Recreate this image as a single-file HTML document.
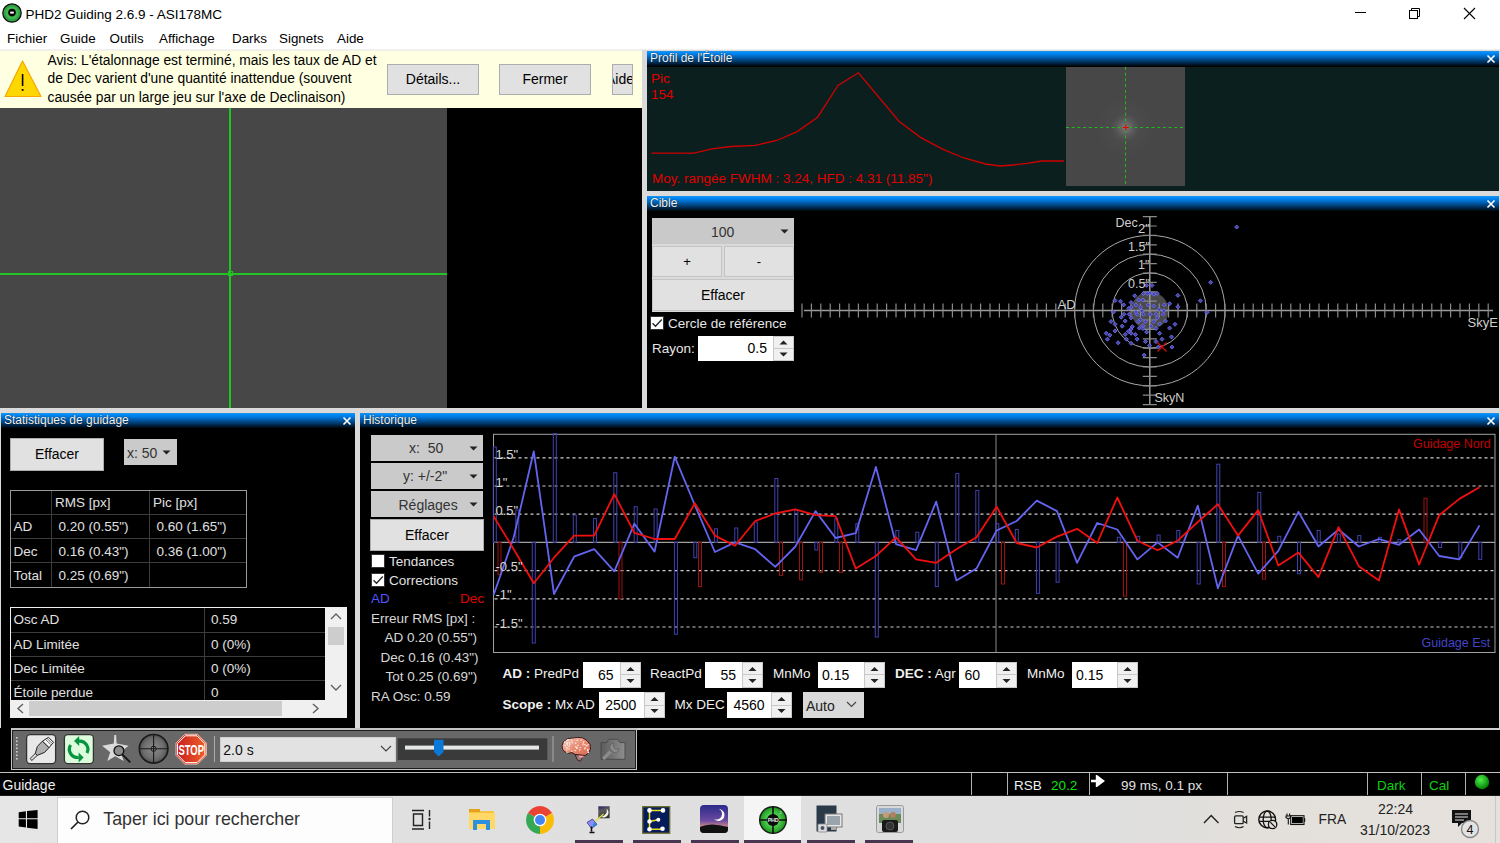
<!DOCTYPE html><html><head><meta charset="utf-8"><style>
html,body{margin:0;padding:0;width:1500px;height:843px;overflow:hidden;background:#fff;position:relative}
.t{position:absolute;font-family:'Liberation Sans', sans-serif;white-space:nowrap;line-height:1}
div{font-family:'Liberation Sans', sans-serif}
</style></head><body>
<div style="position:absolute;left:0px;top:0px;width:1500px;height:49px;background:#fff;"></div>
<svg style="position:absolute;left:2px;top:3px" width="20" height="20" viewBox="0 0 20 20">
<circle cx="10" cy="10" r="9.2" fill="#2ea043" stroke="#111" stroke-width="1.3"/>
<circle cx="10" cy="10" r="6.5" fill="#40b850"/>
<circle cx="10" cy="9.6" r="3.8" fill="#000"/>
<rect x="8.2" y="8.6" width="3.6" height="2" fill="#fff"/>
</svg>
<div class="t" style="left:25.5px;top:7.57px;font-size:13.5px;color:#000;">PHD2 Guiding 2.6.9 - ASI178MC</div>
<div style="position:absolute;left:1355px;top:12px;width:11px;height:1px;background:#000;"></div>
<svg style="position:absolute;left:1408px;top:7px" width="13" height="13" viewBox="0 0 13 13">
<rect x="1.5" y="3.5" width="8" height="8" fill="#fff" stroke="#000" stroke-width="1"/>
<path d="M3.5 3.5 V1.5 H11.5 V9.5 H9.5" fill="none" stroke="#000" stroke-width="1"/></svg>
<svg style="position:absolute;left:1463px;top:7px" width="13" height="13" viewBox="0 0 13 13">
<path d="M1 1 L12 12 M12 1 L1 12" stroke="#000" stroke-width="1.1"/></svg>
<div class="t" style="left:7px;top:32.46px;font-size:13.4px;color:#000;">Fichier</div>
<div class="t" style="left:60px;top:32.46px;font-size:13.4px;color:#000;">Guide</div>
<div class="t" style="left:109.5px;top:32.46px;font-size:13.4px;color:#000;">Outils</div>
<div class="t" style="left:159px;top:32.46px;font-size:13.4px;color:#000;">Affichage</div>
<div class="t" style="left:232px;top:32.46px;font-size:13.4px;color:#000;">Darks</div>
<div class="t" style="left:279px;top:32.46px;font-size:13.4px;color:#000;">Signets</div>
<div class="t" style="left:337px;top:32.46px;font-size:13.4px;color:#000;">Aide</div>
<div style="position:absolute;left:0px;top:49px;width:1500px;height:1px;background:#f0f0f0;"></div>
<div style="position:absolute;left:0px;top:50px;width:1500px;height:746px;background:#dadada;"></div>
<div style="position:absolute;left:0px;top:50px;width:642px;height:58px;background:#ffffe1;"></div>
<div style="position:absolute;left:0px;top:50px;width:642px;height:1px;background:#f3f2ea;"></div>
<svg style="position:absolute;left:4px;top:60px" width="39" height="39" viewBox="0 0 39 39">
<path d="M18.5 1 L37 36.5 L1 36.5 Z" fill="#ffd700" stroke="#f4a800" stroke-width="1.2" stroke-linejoin="round"/>
<rect x="17.8" y="14" width="1.6" height="12" fill="#000"/><rect x="17.7" y="29" width="1.8" height="1.8" fill="#000"/>
</svg>
<div class="t" style="left:47.5px;top:53.62px;font-size:13.8px;color:#000;">Avis: L'étalonnage est terminé, mais les taux de AD et</div>
<div class="t" style="left:47.5px;top:72.22px;font-size:13.8px;color:#000;">de Dec varient d'une quantité inattendue (souvent</div>
<div class="t" style="left:47.5px;top:90.82px;font-size:13.8px;color:#000;">causée par un large jeu sur l'axe de Declinaison)</div>
<div style="position:absolute;left:387px;top:64px;width:92px;height:31px;background:#e1e1e1;border:1px solid #adadad;box-sizing:border-box;font-family:'Liberation Sans', sans-serif;font-size:14px;color:#000;line-height:29px;text-align:center;white-space:nowrap;overflow:hidden;">Détails...</div>
<div style="position:absolute;left:499px;top:64px;width:92px;height:31px;background:#e1e1e1;border:1px solid #adadad;box-sizing:border-box;font-family:'Liberation Sans', sans-serif;font-size:14px;color:#000;line-height:29px;text-align:center;white-space:nowrap;overflow:hidden;">Fermer</div>
<div style="position:absolute;left:612px;top:64px;width:21px;height:31px;background:#e1e1e1;border:1px solid #adadad;box-sizing:border-box;font-family:'Liberation Sans', sans-serif;font-size:14px;color:#000;line-height:29px;text-align:center;white-space:nowrap;overflow:hidden;text-align:left"><span style="position:absolute;left:-7px;top:0;width:28px;text-align:center">Aide</span></div>
<div style="position:absolute;left:0px;top:108px;width:642px;height:299.5px;background:#000;"></div>
<div style="position:absolute;left:0px;top:108px;width:447px;height:299.5px;background:#474747;"></div>
<div style="position:absolute;left:229px;top:108px;width:2px;height:299.5px;background:#22c422;"></div>
<div style="position:absolute;left:0px;top:273px;width:447px;height:2px;background:#22c422;"></div>
<div style="position:absolute;left:227.5px;top:270.5px;width:5px;height:5px;background:transparent;border:1px solid #22c422;box-sizing:border-box"></div>
<div style="position:absolute;left:647px;top:51px;width:852px;height:140px;background:#0b1f1e;"></div><div style="position:absolute;left:647px;top:51px;width:852px;height:16px;background:linear-gradient(#2a94e0 0px,#008cfc 1.5px,#0078dc 4px,#005aa8 7px,#003c70 10px,#001c36 13px,#000 15.5px);"></div><div class="t" style="left:650px;top:52.24px;font-size:12px;color:#f4f4f4;text-shadow:0 0 1px #000">Profil de l'Étoile</div><svg style="position:absolute;left:1486px;top:54px" width="10" height="10" viewBox="0 0 10 10"><path d="M1.5 1.5 L8.5 8.5 M8.5 1.5 L1.5 8.5" stroke="#fff" stroke-width="1.6"/></svg>
<div class="t" style="left:651px;top:71.57px;font-size:13.5px;color:#e00000;">Pic</div>
<div class="t" style="left:651px;top:87.57px;font-size:13.5px;color:#e00000;">154</div>
<div class="t" style="left:652px;top:171.57px;font-size:13.5px;color:#e00000;">Moy. rangée FWHM : 3.24, HFD : 4.31 (11.85")</div>
<svg style="position:absolute;left:0;top:0" width="1500" height="843"><polyline fill="none" stroke="#d00000" stroke-width="1.3" points="651.5,153.2 694,153.2 712,148.9 731.2,146.5 755.2,145.3 776.8,140.5 797.2,131.6 817.6,117.2 838,85.5 858.4,72.8 899.2,121.5 920.8,137.6 943.6,149.6 964,158 985.6,164 1000,166 1013,165 1027,163.3 1041.7,161 1064,161"/></svg>
<div style="position:absolute;left:1066px;top:67px;width:119px;height:119px;background:radial-gradient(circle at 59.5px 60.5px,#7c7c7c 0,#6a6a6a 4px,#565656 9px,#4b4b4b 14px,#474747 30px);"></div>
<svg style="position:absolute;left:1066px;top:67px" width="119" height="119"><path d="M59.5 0 V119 M0 60.5 H119" stroke="#1cbc1c" stroke-width="1" stroke-dasharray="3,2.7"/><path d="M59.8 57.5 V63.5 M56.8 60.5 H62.8" stroke="#ee0000" stroke-width="1.2"/></svg>
<div style="position:absolute;left:647px;top:196px;width:852px;height:211.5px;background:#000;"></div><div style="position:absolute;left:647px;top:196px;width:852px;height:16px;background:linear-gradient(#2a94e0 0px,#008cfc 1.5px,#0078dc 4px,#005aa8 7px,#003c70 10px,#001c36 13px,#000 15.5px);"></div><div class="t" style="left:650px;top:197.24px;font-size:12px;color:#f4f4f4;text-shadow:0 0 1px #000">Cible</div><svg style="position:absolute;left:1486px;top:199px" width="10" height="10" viewBox="0 0 10 10"><path d="M1.5 1.5 L8.5 8.5 M8.5 1.5 L1.5 8.5" stroke="#fff" stroke-width="1.6"/></svg>
<div style="position:absolute;left:652px;top:218px;width:142px;height:26px;background:#c9c9c9;"></div>
<div class="t" style="left:711px;top:224.85px;font-size:14px;color:#333;">100</div>
<svg style="position:absolute;left:780px;top:229px" width="9" height="5"><path d="M0.5 0.5 H8.5 L4.5 4.5 Z" fill="#222"/></svg>
<div style="position:absolute;left:652px;top:244px;width:142px;height:68px;background:#dadada;"></div>
<div style="position:absolute;left:652px;top:245.5px;width:70px;height:31px;background:#e1e1e1;border:1px solid #c4c4c4;box-sizing:border-box;font-family:'Liberation Sans', sans-serif;font-size:13px;color:#000;line-height:29px;text-align:center;white-space:nowrap;overflow:hidden;">+</div>
<div style="position:absolute;left:724px;top:245.5px;width:70px;height:31px;background:#e1e1e1;border:1px solid #c4c4c4;box-sizing:border-box;font-family:'Liberation Sans', sans-serif;font-size:13px;color:#000;line-height:29px;text-align:center;white-space:nowrap;overflow:hidden;">-</div>
<div style="position:absolute;left:652px;top:279px;width:142px;height:32px;background:#e1e1e1;border:1px solid #c4c4c4;box-sizing:border-box;font-family:'Liberation Sans', sans-serif;font-size:14px;color:#000;line-height:30px;text-align:center;white-space:nowrap;overflow:hidden;">Effacer</div>
<div style="position:absolute;left:650px;top:316px;width:14px;height:14px;background:#fff;border:1px solid #333;box-sizing:border-box"></div><svg style="position:absolute;left:650px;top:316px" width="14" height="14" viewBox="0 0 14 14"><path d="M2.5 7.2 L5.5 10.2 L11.8 3.5" fill="none" stroke="#222" stroke-width="1.3"/></svg>
<div class="t" style="left:668px;top:317.17px;font-size:13.5px;color:#e6e6e6;">Cercle de référence</div>
<div class="t" style="left:652px;top:341.57px;font-size:13.5px;color:#e6e6e6;">Rayon:</div>
<div style="position:absolute;left:698px;top:336px;width:75px;height:25px;background:#fff;"></div><div class="t" style="left:698px;top:336px;width:69px;height:25px;line-height:25px;font-size:14px;color:#000;text-align:right">0.5</div><div style="position:absolute;left:773px;top:336px;width:21px;height:25px;background:#f0f0f0;border:1px solid #c8c8c8;box-sizing:border-box"></div><div style="position:absolute;left:774px;top:348.0px;width:19px;height:1px;background:#c8c8c8;"></div><svg style="position:absolute;left:773px;top:336px" width="21" height="25"><path d="M6.5 8.5 L10.5 4.5 L14.5 8.5 Z M6.5 16.5 L10.5 20.5 L14.5 16.5 Z" fill="#222"/></svg>
<svg style="position:absolute;left:0;top:0" width="1500" height="843"><circle cx="1149.8" cy="310.6" r="18.8" fill="#4a4a4a"/><circle cx="1149.8" cy="310.6" r="37.6" fill="none" stroke="#a8a8a8" stroke-width="1"/><circle cx="1149.8" cy="310.6" r="56.4" fill="none" stroke="#a8a8a8" stroke-width="1"/><circle cx="1149.8" cy="310.6" r="75.2" fill="none" stroke="#a8a8a8" stroke-width="1"/><path d="M804 310.6 H1493 M1149.8 216.5 V404.5" stroke="#9a9a9a" stroke-width="1.5"/><path d="M802.0 303.6 V317.4 M811.4 303.6 V317.4 M820.8 303.6 V317.4 M830.2 303.6 V317.4 M839.6 303.6 V317.4 M849.0 303.6 V317.4 M858.4 303.6 V317.4 M867.8 303.6 V317.4 M877.2 303.6 V317.4 M886.6 303.6 V317.4 M896.0 303.6 V317.4 M905.4 303.6 V317.4 M914.8 303.6 V317.4 M924.2 303.6 V317.4 M933.6 303.6 V317.4 M943.0 303.6 V317.4 M952.4 303.6 V317.4 M961.8 303.6 V317.4 M971.2 303.6 V317.4 M980.6 303.6 V317.4 M990.0 303.6 V317.4 M999.4 303.6 V317.4 M1008.8 303.6 V317.4 M1018.2 303.6 V317.4 M1027.6 303.6 V317.4 M1037.0 303.6 V317.4 M1046.4 303.6 V317.4 M1055.8 303.6 V317.4 M1065.2 303.6 V317.4 M1074.6 303.6 V317.4 M1084.0 303.6 V317.4 M1093.4 303.6 V317.4 M1102.8 303.6 V317.4 M1112.2 303.6 V317.4 M1121.6 303.6 V317.4 M1131.0 303.6 V317.4 M1140.4 303.6 V317.4 M1149.8 303.6 V317.4 M1159.2 303.6 V317.4 M1168.6 303.6 V317.4 M1178.0 303.6 V317.4 M1187.4 303.6 V317.4 M1196.8 303.6 V317.4 M1206.2 303.6 V317.4 M1215.6 303.6 V317.4 M1225.0 303.6 V317.4 M1234.4 303.6 V317.4 M1243.8 303.6 V317.4 M1253.2 303.6 V317.4 M1262.6 303.6 V317.4 M1272.0 303.6 V317.4 M1281.4 303.6 V317.4 M1290.8 303.6 V317.4 M1300.2 303.6 V317.4 M1309.6 303.6 V317.4 M1319.0 303.6 V317.4 M1328.4 303.6 V317.4 M1337.8 303.6 V317.4 M1347.2 303.6 V317.4 M1356.6 303.6 V317.4 M1366.0 303.6 V317.4 M1375.4 303.6 V317.4 M1384.8 303.6 V317.4 M1394.2 303.6 V317.4 M1403.6 303.6 V317.4 M1413.0 303.6 V317.4 M1422.4 303.6 V317.4 M1431.8 303.6 V317.4 M1441.2 303.6 V317.4 M1450.6 303.6 V317.4 M1460.0 303.6 V317.4 M1469.4 303.6 V317.4 M1478.8 303.6 V317.4 M1488.2 303.6 V317.4 M1142.8 216.6 H1156.8 M1142.8 226.0 H1156.8 M1142.8 235.4 H1156.8 M1142.8 244.8 H1156.8 M1142.8 254.2 H1156.8 M1142.8 263.6 H1156.8 M1142.8 273.0 H1156.8 M1142.8 282.4 H1156.8 M1142.8 291.8 H1156.8 M1142.8 301.2 H1156.8 M1142.8 310.6 H1156.8 M1142.8 320.0 H1156.8 M1142.8 329.4 H1156.8 M1142.8 338.8 H1156.8 M1142.8 348.2 H1156.8 M1142.8 357.6 H1156.8 M1142.8 367.0 H1156.8 M1142.8 376.4 H1156.8 M1142.8 385.8 H1156.8 M1142.8 395.2 H1156.8 M1142.8 404.6 H1156.8" stroke="#8a8a8a" stroke-width="1.2"/><path d="M1236.7 225.1 L1238.7 227.1 L1236.7 229.1 L1234.7 227.1 Z" fill="#4646a8" stroke="#7070f0" stroke-width="0.9"/><path d="M1210.6 280.3 L1212.6 282.3 L1210.6 284.3 L1208.6 282.3 Z" fill="#4646a8" stroke="#7070f0" stroke-width="0.9"/><path d="M1200.4 298.8 L1202.4 300.8 L1200.4 302.8 L1198.4 300.8 Z" fill="#4646a8" stroke="#7070f0" stroke-width="0.9"/><path d="M1207.0 310.4 L1209.0 312.4 L1207.0 314.4 L1205.0 312.4 Z" fill="#4646a8" stroke="#7070f0" stroke-width="0.9"/><path d="M1177.9 293.4 L1179.9 295.4 L1177.9 297.4 L1175.9 295.4 Z" fill="#4646a8" stroke="#7070f0" stroke-width="0.9"/><path d="M1169.6 301.7 L1171.6 303.7 L1169.6 305.7 L1167.6 303.7 Z" fill="#4646a8" stroke="#7070f0" stroke-width="0.9"/><path d="M1177.9 304.8 L1179.9 306.8 L1177.9 308.8 L1175.9 306.8 Z" fill="#4646a8" stroke="#7070f0" stroke-width="0.9"/><path d="M1163.9 308.8 L1165.9 310.8 L1163.9 312.8 L1161.9 310.8 Z" fill="#4646a8" stroke="#7070f0" stroke-width="0.9"/><path d="M1157.2 291.5 L1159.2 293.5 L1157.2 295.5 L1155.2 293.5 Z" fill="#4646a8" stroke="#7070f0" stroke-width="0.9"/><path d="M1152.0 283.4 L1154.0 285.4 L1152.0 287.4 L1150.0 285.4 Z" fill="#4646a8" stroke="#7070f0" stroke-width="0.9"/><path d="M1146.6 283.4 L1148.6 285.4 L1146.6 287.4 L1144.6 285.4 Z" fill="#4646a8" stroke="#7070f0" stroke-width="0.9"/><path d="M1143.5 291.5 L1145.5 293.5 L1143.5 295.5 L1141.5 293.5 Z" fill="#4646a8" stroke="#7070f0" stroke-width="0.9"/><path d="M1134.7 293.8 L1136.7 295.8 L1134.7 297.8 L1132.7 295.8 Z" fill="#4646a8" stroke="#7070f0" stroke-width="0.9"/><path d="M1123.6 302.9 L1125.6 304.9 L1123.6 306.9 L1121.6 304.9 Z" fill="#4646a8" stroke="#7070f0" stroke-width="0.9"/><path d="M1120.5 299.3 L1122.5 301.3 L1120.5 303.3 L1118.5 301.3 Z" fill="#4646a8" stroke="#7070f0" stroke-width="0.9"/><path d="M1115.0 298.6 L1117.0 300.6 L1115.0 302.6 L1113.0 300.6 Z" fill="#4646a8" stroke="#7070f0" stroke-width="0.9"/><path d="M1113.4 310.0 L1115.4 312.0 L1113.4 314.0 L1111.4 312.0 Z" fill="#4646a8" stroke="#7070f0" stroke-width="0.9"/><path d="M1121.2 315.2 L1123.2 317.2 L1121.2 319.2 L1119.2 317.2 Z" fill="#4646a8" stroke="#7070f0" stroke-width="0.9"/><path d="M1122.1 324.2 L1124.1 326.2 L1122.1 328.2 L1120.1 326.2 Z" fill="#4646a8" stroke="#7070f0" stroke-width="0.9"/><path d="M1115.0 322.3 L1117.0 324.3 L1115.0 326.3 L1113.0 324.3 Z" fill="#4646a8" stroke="#7070f0" stroke-width="0.9"/><path d="M1115.0 328.9 L1117.0 330.9 L1115.0 332.9 L1113.0 330.9 Z" fill="#4646a8" stroke="#7070f0" stroke-width="0.9"/><path d="M1125.2 319.0 L1127.2 321.0 L1125.2 323.0 L1123.2 321.0 Z" fill="#4646a8" stroke="#7070f0" stroke-width="0.9"/><path d="M1129.2 312.3 L1131.2 314.3 L1129.2 316.3 L1127.2 314.3 Z" fill="#4646a8" stroke="#7070f0" stroke-width="0.9"/><path d="M1131.1 300.5 L1133.1 302.5 L1131.1 304.5 L1129.1 302.5 Z" fill="#4646a8" stroke="#7070f0" stroke-width="0.9"/><path d="M1135.9 302.9 L1137.9 304.9 L1135.9 306.9 L1133.9 304.9 Z" fill="#4646a8" stroke="#7070f0" stroke-width="0.9"/><path d="M1143.0 298.1 L1145.0 300.1 L1143.0 302.1 L1141.0 300.1 Z" fill="#4646a8" stroke="#7070f0" stroke-width="0.9"/><path d="M1148.2 302.9 L1150.2 304.9 L1148.2 306.9 L1146.2 304.9 Z" fill="#4646a8" stroke="#7070f0" stroke-width="0.9"/><path d="M1153.7 304.0 L1155.7 306.0 L1153.7 308.0 L1151.7 306.0 Z" fill="#4646a8" stroke="#7070f0" stroke-width="0.9"/><path d="M1159.1 307.6 L1161.1 309.6 L1159.1 311.6 L1157.1 309.6 Z" fill="#4646a8" stroke="#7070f0" stroke-width="0.9"/><path d="M1163.2 312.3 L1165.2 314.3 L1163.2 316.3 L1161.2 314.3 Z" fill="#4646a8" stroke="#7070f0" stroke-width="0.9"/><path d="M1165.5 319.0 L1167.5 321.0 L1165.5 323.0 L1163.5 321.0 Z" fill="#4646a8" stroke="#7070f0" stroke-width="0.9"/><path d="M1169.6 326.1 L1171.6 328.1 L1169.6 330.1 L1167.6 328.1 Z" fill="#4646a8" stroke="#7070f0" stroke-width="0.9"/><path d="M1175.0 322.3 L1177.0 324.3 L1175.0 326.3 L1173.0 324.3 Z" fill="#4646a8" stroke="#7070f0" stroke-width="0.9"/><path d="M1171.5 334.9 L1173.5 336.9 L1171.5 338.9 L1169.5 336.9 Z" fill="#4646a8" stroke="#7070f0" stroke-width="0.9"/><path d="M1159.6 331.3 L1161.6 333.3 L1159.6 335.3 L1157.6 333.3 Z" fill="#4646a8" stroke="#7070f0" stroke-width="0.9"/><path d="M1156.0 339.6 L1158.0 341.6 L1156.0 343.6 L1154.0 341.6 Z" fill="#4646a8" stroke="#7070f0" stroke-width="0.9"/><path d="M1151.3 324.2 L1153.3 326.2 L1151.3 328.2 L1149.3 326.2 Z" fill="#4646a8" stroke="#7070f0" stroke-width="0.9"/><path d="M1146.6 330.1 L1148.6 332.1 L1146.6 334.1 L1144.6 332.1 Z" fill="#4646a8" stroke="#7070f0" stroke-width="0.9"/><path d="M1143.0 323.7 L1145.0 325.7 L1143.0 327.7 L1141.0 325.7 Z" fill="#4646a8" stroke="#7070f0" stroke-width="0.9"/><path d="M1139.4 326.1 L1141.4 328.1 L1139.4 330.1 L1137.4 328.1 Z" fill="#4646a8" stroke="#7070f0" stroke-width="0.9"/><path d="M1135.4 332.5 L1137.4 334.5 L1135.4 336.5 L1133.4 334.5 Z" fill="#4646a8" stroke="#7070f0" stroke-width="0.9"/><path d="M1131.1 327.0 L1133.1 329.0 L1131.1 331.0 L1129.1 329.0 Z" fill="#4646a8" stroke="#7070f0" stroke-width="0.9"/><path d="M1128.3 329.4 L1130.3 331.4 L1128.3 333.4 L1126.3 331.4 Z" fill="#4646a8" stroke="#7070f0" stroke-width="0.9"/><path d="M1125.2 332.5 L1127.2 334.5 L1125.2 336.5 L1123.2 334.5 Z" fill="#4646a8" stroke="#7070f0" stroke-width="0.9"/><path d="M1118.1 340.8 L1120.1 342.8 L1118.1 344.8 L1116.1 342.8 Z" fill="#4646a8" stroke="#7070f0" stroke-width="0.9"/><path d="M1106.2 331.3 L1108.2 333.3 L1106.2 335.3 L1104.2 333.3 Z" fill="#4646a8" stroke="#7070f0" stroke-width="0.9"/><path d="M1109.8 333.2 L1111.8 335.2 L1109.8 337.2 L1107.8 335.2 Z" fill="#4646a8" stroke="#7070f0" stroke-width="0.9"/><path d="M1107.4 337.2 L1109.4 339.2 L1107.4 341.2 L1105.4 339.2 Z" fill="#4646a8" stroke="#7070f0" stroke-width="0.9"/><path d="M1131.1 341.3 L1133.1 343.3 L1131.1 345.3 L1129.1 343.3 Z" fill="#4646a8" stroke="#7070f0" stroke-width="0.9"/><path d="M1137.1 337.2 L1139.1 339.2 L1137.1 341.2 L1135.1 339.2 Z" fill="#4646a8" stroke="#7070f0" stroke-width="0.9"/><path d="M1145.4 339.6 L1147.4 341.6 L1145.4 343.6 L1143.4 341.6 Z" fill="#4646a8" stroke="#7070f0" stroke-width="0.9"/><path d="M1149.6 343.6 L1151.6 345.6 L1149.6 347.6 L1147.6 345.6 Z" fill="#4646a8" stroke="#7070f0" stroke-width="0.9"/><path d="M1158.4 345.1 L1160.4 347.1 L1158.4 349.1 L1156.4 347.1 Z" fill="#4646a8" stroke="#7070f0" stroke-width="0.9"/><path d="M1171.9 345.1 L1173.9 347.1 L1171.9 349.1 L1169.9 347.1 Z" fill="#4646a8" stroke="#7070f0" stroke-width="0.9"/><path d="M1144.2 353.1 L1146.2 355.1 L1144.2 357.1 L1142.2 355.1 Z" fill="#4646a8" stroke="#7070f0" stroke-width="0.9"/><path d="M1140.6 317.6 L1142.6 319.6 L1140.6 321.6 L1138.6 319.6 Z" fill="#4646a8" stroke="#7070f0" stroke-width="0.9"/><path d="M1137.1 312.3 L1139.1 314.3 L1137.1 316.3 L1135.1 314.3 Z" fill="#4646a8" stroke="#7070f0" stroke-width="0.9"/><path d="M1131.1 315.9 L1133.1 317.9 L1131.1 319.9 L1129.1 317.9 Z" fill="#4646a8" stroke="#7070f0" stroke-width="0.9"/><path d="M1141.8 308.8 L1143.8 310.8 L1141.8 312.8 L1139.8 310.8 Z" fill="#4646a8" stroke="#7070f0" stroke-width="0.9"/><path d="M1150.1 312.3 L1152.1 314.3 L1150.1 316.3 L1148.1 314.3 Z" fill="#4646a8" stroke="#7070f0" stroke-width="0.9"/><path d="M1153.7 319.5 L1155.7 321.5 L1153.7 323.5 L1151.7 321.5 Z" fill="#4646a8" stroke="#7070f0" stroke-width="0.9"/><path d="M1157.2 315.9 L1159.2 317.9 L1157.2 319.9 L1155.2 317.9 Z" fill="#4646a8" stroke="#7070f0" stroke-width="0.9"/><path d="M1145.4 319.5 L1147.4 321.5 L1145.4 323.5 L1143.4 321.5 Z" fill="#4646a8" stroke="#7070f0" stroke-width="0.9"/><path d="M1138.3 319.5 L1140.3 321.5 L1138.3 323.5 L1136.3 321.5 Z" fill="#4646a8" stroke="#7070f0" stroke-width="0.9"/><path d="M1135.9 310.0 L1137.9 312.0 L1135.9 314.0 L1133.9 312.0 Z" fill="#4646a8" stroke="#7070f0" stroke-width="0.9"/><path d="M1156.0 312.3 L1158.0 314.3 L1156.0 316.3 L1154.0 314.3 Z" fill="#4646a8" stroke="#7070f0" stroke-width="0.9"/><path d="M1164.3 302.9 L1166.3 304.9 L1164.3 306.9 L1162.3 304.9 Z" fill="#4646a8" stroke="#7070f0" stroke-width="0.9"/><path d="M1131.1 305.2 L1133.1 307.2 L1131.1 309.2 L1129.1 307.2 Z" fill="#4646a8" stroke="#7070f0" stroke-width="0.9"/><path d="M1143.0 326.6 L1145.0 328.6 L1143.0 330.6 L1141.0 328.6 Z" fill="#4646a8" stroke="#7070f0" stroke-width="0.9"/><path d="M1132.3 324.7 L1134.3 326.7 L1132.3 328.7 L1130.3 326.7 Z" fill="#4646a8" stroke="#7070f0" stroke-width="0.9"/><path d="M1150.1 291.0 L1152.1 293.0 L1150.1 295.0 L1148.1 293.0 Z" fill="#4646a8" stroke="#7070f0" stroke-width="0.9"/><path d="M1153.7 292.2 L1155.7 294.2 L1153.7 296.2 L1151.7 294.2 Z" fill="#4646a8" stroke="#7070f0" stroke-width="0.9"/><path d="M1147.3 291.5 L1149.3 293.5 L1147.3 295.5 L1145.3 293.5 Z" fill="#4646a8" stroke="#7070f0" stroke-width="0.9"/><path d="M1128.8 306.4 L1130.8 308.4 L1128.8 310.4 L1126.8 308.4 Z" fill="#4646a8" stroke="#7070f0" stroke-width="0.9"/><path d="M1140.6 305.2 L1142.6 307.2 L1140.6 309.2 L1138.6 307.2 Z" fill="#4646a8" stroke="#7070f0" stroke-width="0.9"/><path d="M1159.6 321.8 L1161.6 323.8 L1159.6 325.8 L1157.6 323.8 Z" fill="#4646a8" stroke="#7070f0" stroke-width="0.9"/><path d="M1131.1 331.3 L1133.1 333.3 L1131.1 335.3 L1129.1 333.3 Z" fill="#4646a8" stroke="#7070f0" stroke-width="0.9"/><path d="M1156.0 326.6 L1158.0 328.6 L1156.0 330.6 L1154.0 328.6 Z" fill="#4646a8" stroke="#7070f0" stroke-width="0.9"/><path d="M1143.5 312.3 L1145.5 314.3 L1143.5 316.3 L1141.5 314.3 Z" fill="#4646a8" stroke="#7070f0" stroke-width="0.9"/><path d="M1138.7 298.1 L1140.7 300.1 L1138.7 302.1 L1136.7 300.1 Z" fill="#4646a8" stroke="#7070f0" stroke-width="0.9"/><path d="M1124.0 312.3 L1126.0 314.3 L1124.0 316.3 L1122.0 314.3 Z" fill="#4646a8" stroke="#7070f0" stroke-width="0.9"/><path d="M1111.0 319.5 L1113.0 321.5 L1111.0 323.5 L1109.0 321.5 Z" fill="#4646a8" stroke="#7070f0" stroke-width="0.9"/><path d="M1126.4 337.2 L1128.4 339.2 L1126.4 341.2 L1124.4 339.2 Z" fill="#4646a8" stroke="#7070f0" stroke-width="0.9"/><path d="M1162.0 337.2 L1164.0 339.2 L1162.0 341.2 L1160.0 339.2 Z" fill="#4646a8" stroke="#7070f0" stroke-width="0.9"/><path d="M1157.5 342.5 L1166.5 351.5 M1166.5 342.5 L1157.5 351.5" stroke="#cc1010" stroke-width="1.3"/></svg>
<div class="t" style="left:1115.5px;top:217.42px;font-size:12.5px;color:#cfcfcf;">Dec</div>
<div class="t" style="left:1138px;top:222.0px;font-size:13px;color:#cfcfcf;">2"</div>
<div class="t" style="left:1128px;top:241.42px;font-size:12.5px;color:#cfcfcf;">1.5"</div>
<div class="t" style="left:1138px;top:259.42px;font-size:12.5px;color:#cfcfcf;">1"</div>
<div class="t" style="left:1128px;top:278.42px;font-size:12.5px;color:#cfcfcf;">0.5"</div>
<div class="t" style="left:1057.5px;top:298.3px;font-size:13px;color:#cfcfcf;">AD</div>
<div class="t" style="left:1154.5px;top:392.42px;font-size:12.5px;color:#cfcfcf;">SkyN</div>
<div class="t" style="left:1467.5px;top:316.0px;font-size:13px;color:#cfcfcf;">SkyE</div>
<div style="position:absolute;left:1px;top:412.5px;width:354px;height:315.5px;background:#000;"></div><div style="position:absolute;left:1px;top:412.5px;width:354px;height:16px;background:linear-gradient(#2a94e0 0px,#008cfc 1.5px,#0078dc 4px,#005aa8 7px,#003c70 10px,#001c36 13px,#000 15.5px);"></div><div class="t" style="left:4px;top:413.74px;font-size:12px;color:#f4f4f4;text-shadow:0 0 1px #000">Statistiques de guidage</div><svg style="position:absolute;left:342px;top:415.5px" width="10" height="10" viewBox="0 0 10 10"><path d="M1.5 1.5 L8.5 8.5 M8.5 1.5 L1.5 8.5" stroke="#fff" stroke-width="1.6"/></svg>
<div style="position:absolute;left:10px;top:438px;width:94px;height:33px;background:#e1e1e1;border:1px solid #adadad;box-sizing:border-box;font-family:'Liberation Sans', sans-serif;font-size:14px;color:#000;line-height:31px;text-align:center;white-space:nowrap;overflow:hidden;">Effacer</div>
<div style="position:absolute;left:124px;top:439px;width:53px;height:26px;background:#cacaca;"></div>
<div class="t" style="left:127px;top:446.15px;font-size:14px;color:#333;">x: 50</div>
<svg style="position:absolute;left:162px;top:450px" width="9" height="5"><path d="M0.5 0.5 H8.5 L4.5 4.5 Z" fill="#222"/></svg>
<div style="position:absolute;left:10px;top:490px;width:237px;height:98px;background:#000;border:1px solid #9a9a9a;box-sizing:border-box"></div>
<div style="position:absolute;left:51px;top:491px;width:1px;height:96px;background:#3c3c3c;"></div>
<div style="position:absolute;left:149px;top:491px;width:1px;height:96px;background:#3c3c3c;"></div>
<div style="position:absolute;left:11px;top:514px;width:235px;height:1px;background:#3c3c3c;"></div>
<div style="position:absolute;left:11px;top:538px;width:235px;height:1px;background:#3c3c3c;"></div>
<div style="position:absolute;left:11px;top:562px;width:235px;height:1px;background:#3c3c3c;"></div>
<div class="t" style="left:13.5px;top:496.27px;font-size:13.5px;color:#e0e0e0;"></div>
<div class="t" style="left:55px;top:496.27px;font-size:13.5px;color:#e0e0e0;">RMS [px]</div>
<div class="t" style="left:153px;top:496.27px;font-size:13.5px;color:#e0e0e0;">Pic [px]</div>
<div class="t" style="left:13.5px;top:520.47px;font-size:13.5px;color:#e0e0e0;">AD</div>
<div class="t" style="left:58.4px;top:520.47px;font-size:13.5px;color:#e0e0e0;">0.20 (0.55")</div>
<div class="t" style="left:156.5px;top:520.47px;font-size:13.5px;color:#e0e0e0;">0.60 (1.65")</div>
<div class="t" style="left:13.5px;top:544.67px;font-size:13.5px;color:#e0e0e0;">Dec</div>
<div class="t" style="left:58.4px;top:544.67px;font-size:13.5px;color:#e0e0e0;">0.16 (0.43")</div>
<div class="t" style="left:156.5px;top:544.67px;font-size:13.5px;color:#e0e0e0;">0.36 (1.00")</div>
<div class="t" style="left:13.5px;top:568.87px;font-size:13.5px;color:#e0e0e0;">Total</div>
<div class="t" style="left:58.4px;top:568.87px;font-size:13.5px;color:#e0e0e0;">0.25 (0.69")</div>
<div class="t" style="left:156.5px;top:568.87px;font-size:13.5px;color:#e0e0e0;"></div>
<div style="position:absolute;left:10px;top:607px;width:337px;height:111px;background:#f0f0f0;"></div>
<div style="position:absolute;left:11px;top:608px;width:314px;height:92px;background:#000;"></div>
<div style="position:absolute;left:204px;top:608px;width:1px;height:92px;background:#3c3c3c;"></div>
<div style="position:absolute;left:11px;top:632px;width:314px;height:1px;background:#3c3c3c;"></div>
<div style="position:absolute;left:11px;top:656px;width:314px;height:1px;background:#3c3c3c;"></div>
<div style="position:absolute;left:11px;top:680px;width:314px;height:1px;background:#3c3c3c;"></div>
<div class="t" style="left:13.5px;top:613.17px;font-size:13.5px;color:#e0e0e0;">Osc AD</div>
<div class="t" style="left:211px;top:613.17px;font-size:13.5px;color:#e0e0e0;">0.59</div>
<div class="t" style="left:13.5px;top:637.57px;font-size:13.5px;color:#e0e0e0;">AD Limitée</div>
<div class="t" style="left:211px;top:637.57px;font-size:13.5px;color:#e0e0e0;">0 (0%)</div>
<div class="t" style="left:13.5px;top:661.97px;font-size:13.5px;color:#e0e0e0;">Dec Limitée</div>
<div class="t" style="left:211px;top:661.97px;font-size:13.5px;color:#e0e0e0;">0 (0%)</div>
<div class="t" style="left:13.5px;top:686.37px;font-size:13.5px;color:#e0e0e0;">Étoile perdue</div>
<div class="t" style="left:211px;top:686.37px;font-size:13.5px;color:#e0e0e0;">0</div>
<div style="position:absolute;left:11px;top:700px;width:314px;height:1px;background:#f0f0f0;"></div>
<div style="position:absolute;left:326px;top:608px;width:20px;height:92px;background:#f0f0f0;"></div>
<div style="position:absolute;left:328px;top:627px;width:16px;height:18px;background:#cdcdcd;"></div>
<svg style="position:absolute;left:326px;top:608px" width="20" height="92"><path d="M5 11 L10 6 L15 11 M5 77 L10 82 L15 77" fill="none" stroke="#606060" stroke-width="1.4"/></svg>
<div style="position:absolute;left:11px;top:700px;width:315px;height:17px;background:#f0f0f0;"></div>
<div style="position:absolute;left:29px;top:701px;width:253px;height:15px;background:#cdcdcd;"></div>
<svg style="position:absolute;left:11px;top:700px" width="315" height="17"><path d="M12 4 L7 8.5 L12 13 M302 4 L307 8.5 L302 13" fill="none" stroke="#606060" stroke-width="1.4"/></svg>
<div style="position:absolute;left:360px;top:412.5px;width:1139px;height:315.5px;background:#000;"></div><div style="position:absolute;left:360px;top:412.5px;width:1139px;height:16px;background:linear-gradient(#2a94e0 0px,#008cfc 1.5px,#0078dc 4px,#005aa8 7px,#003c70 10px,#001c36 13px,#000 15.5px);"></div><div class="t" style="left:363px;top:413.74px;font-size:12px;color:#f4f4f4;text-shadow:0 0 1px #000">Historique</div><svg style="position:absolute;left:1486px;top:415.5px" width="10" height="10" viewBox="0 0 10 10"><path d="M1.5 1.5 L8.5 8.5 M8.5 1.5 L1.5 8.5" stroke="#fff" stroke-width="1.6"/></svg>
<div style="position:absolute;left:371px;top:435px;width:112px;height:26px;background:#cacaca;"></div>
<div class="t" style="left:409px;top:441.45px;font-size:14px;color:#333;">x:&nbsp; 50</div>
<svg style="position:absolute;left:469px;top:446px" width="9" height="5"><path d="M0.5 0.5 H8.5 L4.5 4.5 Z" fill="#222"/></svg>
<div style="position:absolute;left:371px;top:463px;width:112px;height:26px;background:#cacaca;"></div>
<div class="t" style="left:403px;top:469.35px;font-size:14px;color:#333;">y: +/-2"</div>
<svg style="position:absolute;left:469px;top:474px" width="9" height="5"><path d="M0.5 0.5 H8.5 L4.5 4.5 Z" fill="#222"/></svg>
<div style="position:absolute;left:371px;top:491px;width:112px;height:26px;background:#cacaca;"></div>
<div class="t" style="left:398.5px;top:497.65px;font-size:14px;color:#333;">Réglages</div>
<svg style="position:absolute;left:469px;top:502px" width="9" height="5"><path d="M0.5 0.5 H8.5 L4.5 4.5 Z" fill="#222"/></svg>
<div style="position:absolute;left:370px;top:519px;width:114px;height:32px;background:#e1e1e1;border:1px solid #adadad;box-sizing:border-box;font-family:'Liberation Sans', sans-serif;font-size:14px;color:#000;line-height:30px;text-align:center;white-space:nowrap;overflow:hidden;">Effacer</div>
<div style="position:absolute;left:371px;top:554px;width:14px;height:14px;background:#fff;border:1px solid #333;box-sizing:border-box"></div>
<div class="t" style="left:389px;top:555.17px;font-size:13.5px;color:#e0e0e0;">Tendances</div>
<div style="position:absolute;left:371px;top:573px;width:14px;height:14px;background:#fff;border:1px solid #333;box-sizing:border-box"></div><svg style="position:absolute;left:371px;top:573px" width="14" height="14" viewBox="0 0 14 14"><path d="M2.5 7.2 L5.5 10.2 L11.8 3.5" fill="none" stroke="#222" stroke-width="1.3"/></svg>
<div class="t" style="left:389px;top:573.77px;font-size:13.5px;color:#e0e0e0;">Corrections</div>
<div class="t" style="left:371px;top:591.87px;font-size:13.5px;color:#5555ff;">AD</div>
<div class="t" style="left:460px;top:591.87px;font-size:13.5px;color:#e00000;">Dec</div>
<div class="t" style="left:371px;top:611.97px;font-size:13.5px;color:#d8d8d8;">Erreur RMS [px] :</div>
<div class="t" style="left:384.5px;top:631.17px;font-size:13.5px;color:#d8d8d8;">AD 0.20 (0.55")</div>
<div class="t" style="left:380.6px;top:650.57px;font-size:13.5px;color:#d8d8d8;">Dec 0.16 (0.43")</div>
<div class="t" style="left:385.5px;top:670.17px;font-size:13.5px;color:#d8d8d8;">Tot 0.25 (0.69")</div>
<div class="t" style="left:371px;top:690.37px;font-size:13.5px;color:#d8d8d8;">RA Osc: 0.59</div>
<svg style="position:absolute;left:0;top:0" width="1500" height="843"><rect x="493.5" y="434.3" width="1001.5" height="218.2" fill="none" stroke="#a0a0a0" stroke-width="1"/><path d="M494.5 457.8 H1495" stroke="#d0d0d0" stroke-width="1.2" stroke-dasharray="3,3"/><path d="M494.5 486 H1495" stroke="#d0d0d0" stroke-width="1.2" stroke-dasharray="3,3"/><path d="M494.5 514.2 H1495" stroke="#d0d0d0" stroke-width="1.2" stroke-dasharray="3,3"/><path d="M494.5 570.6 H1495" stroke="#d0d0d0" stroke-width="1.2" stroke-dasharray="3,3"/><path d="M494.5 598.8 H1495" stroke="#d0d0d0" stroke-width="1.2" stroke-dasharray="3,3"/><path d="M494.5 627.0 H1495" stroke="#d0d0d0" stroke-width="1.2" stroke-dasharray="3,3"/><path d="M493.5 542.4 H1495" stroke="#a0a0a0" stroke-width="1.2"/><path d="M996 434.3 V652.5" stroke="#8a8a8a" stroke-width="1"/><rect x="493.3" y="447.0" width="3" height="95.4" fill="none" stroke="#4040b0" stroke-width="1"/><rect x="515.8" y="510.0" width="3" height="32.4" fill="none" stroke="#4040b0" stroke-width="1"/><rect x="532.3" y="542.4" width="3" height="100.6" fill="none" stroke="#4040b0" stroke-width="1"/><rect x="553.3" y="433.6" width="3" height="108.8" fill="none" stroke="#4040b0" stroke-width="1"/><rect x="573.3" y="515.0" width="3" height="27.4" fill="none" stroke="#4040b0" stroke-width="1"/><rect x="593.5" y="518.6" width="3" height="23.8" fill="none" stroke="#4040b0" stroke-width="1"/><rect x="613.8" y="472.7" width="3" height="69.7" fill="none" stroke="#4040b0" stroke-width="1"/><rect x="634.1999999999999" y="506.7" width="3" height="35.7" fill="none" stroke="#4040b0" stroke-width="1"/><rect x="654.0999999999999" y="509.0" width="3" height="33.4" fill="none" stroke="#4040b0" stroke-width="1"/><rect x="674.4" y="542.4" width="3" height="91.8" fill="none" stroke="#4040b0" stroke-width="1"/><rect x="693.8" y="542.4" width="3" height="15.3" fill="none" stroke="#4040b0" stroke-width="1"/><rect x="714.4" y="528.8" width="3" height="13.6" fill="none" stroke="#4040b0" stroke-width="1"/><rect x="734.8" y="528.0" width="3" height="14.4" fill="none" stroke="#4040b0" stroke-width="1"/><rect x="754.3" y="522.0" width="3" height="20.4" fill="none" stroke="#4040b0" stroke-width="1"/><rect x="774.8" y="478.5" width="3" height="63.9" fill="none" stroke="#4040b0" stroke-width="1"/><rect x="794.8" y="510.0" width="3" height="32.4" fill="none" stroke="#4040b0" stroke-width="1"/><rect x="814.8" y="542.4" width="3" height="7.6" fill="none" stroke="#4040b0" stroke-width="1"/><rect x="834.8" y="518.6" width="3" height="23.8" fill="none" stroke="#4040b0" stroke-width="1"/><rect x="855.8" y="523.7" width="3" height="18.7" fill="none" stroke="#4040b0" stroke-width="1"/><rect x="875.3" y="542.4" width="3" height="94.6" fill="none" stroke="#4040b0" stroke-width="1"/><rect x="895.8" y="530.5" width="3" height="11.9" fill="none" stroke="#4040b0" stroke-width="1"/><rect x="915.8" y="532.2" width="3" height="10.2" fill="none" stroke="#4040b0" stroke-width="1"/><rect x="935.3" y="542.4" width="3" height="44.2" fill="none" stroke="#4040b0" stroke-width="1"/><rect x="955.8" y="473.4" width="3" height="69.0" fill="none" stroke="#4040b0" stroke-width="1"/><rect x="975.8" y="490.4" width="3" height="52.0" fill="none" stroke="#4040b0" stroke-width="1"/><rect x="995.8" y="523.7" width="3" height="18.7" fill="none" stroke="#4040b0" stroke-width="1"/><rect x="1015.3" y="529.5" width="3" height="12.9" fill="none" stroke="#4040b0" stroke-width="1"/><rect x="1036.3999999999999" y="542.4" width="3" height="51.0" fill="none" stroke="#4040b0" stroke-width="1"/><rect x="1056.1" y="542.4" width="3" height="39.8" fill="none" stroke="#4040b0" stroke-width="1"/><rect x="1117.3" y="537.3" width="3" height="5.1" fill="none" stroke="#4040b0" stroke-width="1"/><rect x="1136.7" y="536.3" width="3" height="6.1" fill="none" stroke="#4040b0" stroke-width="1"/><rect x="1157.1" y="535.0" width="3" height="7.4" fill="none" stroke="#4040b0" stroke-width="1"/><rect x="1176.8" y="530.5" width="3" height="11.9" fill="none" stroke="#4040b0" stroke-width="1"/><rect x="1197.2" y="542.4" width="3" height="41.6" fill="none" stroke="#4040b0" stroke-width="1"/><rect x="1216.8" y="464.2" width="3" height="78.2" fill="none" stroke="#4040b0" stroke-width="1"/><rect x="1257.8" y="492.4" width="3" height="50.0" fill="none" stroke="#4040b0" stroke-width="1"/><rect x="1277.8" y="536.3" width="3" height="6.1" fill="none" stroke="#4040b0" stroke-width="1"/><rect x="1297.5" y="542.4" width="3" height="31.3" fill="none" stroke="#4040b0" stroke-width="1"/><rect x="1317.2" y="530.5" width="3" height="11.9" fill="none" stroke="#4040b0" stroke-width="1"/><rect x="1337.3" y="534.0" width="3" height="8.4" fill="none" stroke="#4040b0" stroke-width="1"/><rect x="1357.8" y="535.6" width="3" height="6.8" fill="none" stroke="#4040b0" stroke-width="1"/><rect x="1378.3999999999999" y="537.3" width="3" height="5.1" fill="none" stroke="#4040b0" stroke-width="1"/><rect x="1397.8" y="539.7" width="3" height="2.7" fill="none" stroke="#4040b0" stroke-width="1"/><rect x="1438.6" y="542.4" width="3" height="5.1" fill="none" stroke="#4040b0" stroke-width="1"/><rect x="1458.8" y="542.4" width="3" height="15.3" fill="none" stroke="#4040b0" stroke-width="1"/><rect x="1478.8" y="542.4" width="3" height="17.0" fill="none" stroke="#4040b0" stroke-width="1"/><rect x="498.0" y="542.4" width="3" height="32.3" fill="none" stroke="#a01010" stroke-width="1"/><rect x="619.0" y="542.4" width="3" height="56.1" fill="none" stroke="#a01010" stroke-width="1"/><rect x="698.5" y="542.4" width="3" height="44.2" fill="none" stroke="#a01010" stroke-width="1"/><rect x="779.5" y="542.4" width="3" height="33.0" fill="none" stroke="#a01010" stroke-width="1"/><rect x="799.5" y="542.4" width="3" height="37.4" fill="none" stroke="#a01010" stroke-width="1"/><rect x="819.5" y="542.4" width="3" height="29.9" fill="none" stroke="#a01010" stroke-width="1"/><rect x="839.5" y="542.4" width="3" height="29.9" fill="none" stroke="#a01010" stroke-width="1"/><rect x="1001.5" y="542.4" width="3" height="41.6" fill="none" stroke="#a01010" stroke-width="1"/><rect x="1123.5" y="542.4" width="3" height="53.6" fill="none" stroke="#a01010" stroke-width="1"/><rect x="1222.5" y="542.4" width="3" height="44.2" fill="none" stroke="#a01010" stroke-width="1"/><rect x="1262.5" y="542.4" width="3" height="36.6" fill="none" stroke="#a01010" stroke-width="1"/><rect x="1424.0" y="498.2" width="3" height="44.2" fill="none" stroke="#a01010" stroke-width="1"/><polyline fill="none" stroke="#6464f0" stroke-width="1.8" stroke-linejoin="round" points="493.6,595 513.7,537.3 533.8,451.3 554.0,594 574.1,556.7 594.2,549.2 614.3,571.3 634.4,523.7 654.6,551.6 674.7,456.7 694.8,505 714.9,552 735.0,542.4 755.2,549.2 775.3,566.9 795.4,546.5 815.5,511.1 835.6,538 855.8,533.2 875.9,466.9 896.0,544.1 916.1,550.2 936.2,501.6 956.4,580.5 976.5,568.6 996.6,530.5 1016.7,521 1036.8,500.6 1057.0,511.1 1077.1,562.8 1097.2,523 1117.3,529.5 1137.4,559.4 1157.6,542.4 1177.7,557.7 1197.8,505.7 1217.9,588.3 1238.0,535.6 1258.2,573.7 1278.3,550.9 1298.4,511.8 1318.5,546.5 1338.6,529.5 1358.8,546.5 1378.9,539 1399.0,544.8 1419.1,529.5 1439.2,556 1459.4,559.4 1479.5,525.4"/><polyline fill="none" stroke="#f01010" stroke-width="1.8" stroke-linejoin="round" points="493.6,516.2 513.7,549.2 533.8,583.2 554.0,557.7 574.1,535.6 594.2,535.6 614.3,494.1 634.4,532.9 654.6,539 674.7,539 694.8,503.3 714.9,535.6 735.0,545.8 755.2,521 775.3,513.5 795.4,509.4 815.5,515.2 835.6,516.2 855.8,568.6 875.9,556 896.0,537.3 916.1,559.4 936.2,562.8 956.4,549.2 976.5,537.3 996.6,506.7 1016.7,543 1036.8,547.5 1057.0,536.6 1077.1,528.8 1097.2,543 1117.3,497.5 1137.4,540.7 1157.6,550.2 1177.7,540.7 1197.8,522 1217.9,504.3 1238.0,535.6 1258.2,510.1 1278.3,565.5 1298.4,552.6 1318.5,577.1 1338.6,527.1 1358.8,566.2 1378.9,580.5 1399.0,509.4 1419.1,564.5 1439.2,515.2 1459.4,498.9 1479.5,487.3"/></svg>
<div class="t" style="left:495.5px;top:447.5px;font-size:13px;color:#d8d8d8;">1.5"</div>
<div class="t" style="left:495.5px;top:475.5px;font-size:13px;color:#d8d8d8;">1"</div>
<div class="t" style="left:495.5px;top:503.7px;font-size:13px;color:#d8d8d8;">0.5"</div>
<div class="t" style="left:495.5px;top:560.0px;font-size:13px;color:#d8d8d8;">-0.5"</div>
<div class="t" style="left:495.5px;top:588.3px;font-size:13px;color:#d8d8d8;">-1"</div>
<div class="t" style="left:495.5px;top:616.5px;font-size:13px;color:#d8d8d8;">-1.5"</div>
<div class="t" style="left:1413px;top:437.72px;font-size:12.5px;color:#c00000;">Guidage Nord</div>
<div class="t" style="left:1421.5px;top:636.92px;font-size:12.5px;color:#4444c8;">Guidage Est</div>
<div class="t" style="left:502.5px;top:667.27px;font-size:13.5px;color:#f0f0f0;"><b>AD :</b> PredPd</div>
<div style="position:absolute;left:582.5px;top:661.5px;width:37px;height:26px;background:#fff;"></div><div class="t" style="left:582.5px;top:661.5px;width:31px;height:26px;line-height:26px;font-size:14px;color:#000;text-align:right">65</div><div style="position:absolute;left:619.5px;top:661.5px;width:21px;height:26px;background:#f0f0f0;border:1px solid #c8c8c8;box-sizing:border-box"></div><div style="position:absolute;left:620.5px;top:674.0px;width:19px;height:1px;background:#c8c8c8;"></div><svg style="position:absolute;left:619.5px;top:661.5px" width="21" height="26"><path d="M6.5 9.0 L10.5 5.0 L14.5 9.0 Z M6.5 17.0 L10.5 21.0 L14.5 17.0 Z" fill="#222"/></svg>
<div class="t" style="left:650px;top:667.27px;font-size:13.5px;color:#f0f0f0;">ReactPd</div>
<div style="position:absolute;left:705px;top:661.5px;width:37px;height:26px;background:#fff;"></div><div class="t" style="left:705px;top:661.5px;width:31px;height:26px;line-height:26px;font-size:14px;color:#000;text-align:right">55</div><div style="position:absolute;left:742px;top:661.5px;width:21px;height:26px;background:#f0f0f0;border:1px solid #c8c8c8;box-sizing:border-box"></div><div style="position:absolute;left:743px;top:674.0px;width:19px;height:1px;background:#c8c8c8;"></div><svg style="position:absolute;left:742px;top:661.5px" width="21" height="26"><path d="M6.5 9.0 L10.5 5.0 L14.5 9.0 Z M6.5 17.0 L10.5 21.0 L14.5 17.0 Z" fill="#222"/></svg>
<div class="t" style="left:773px;top:667.27px;font-size:13.5px;color:#f0f0f0;">MnMo</div>
<div style="position:absolute;left:818px;top:661.5px;width:46px;height:26px;background:#fff;"></div><div class="t" style="left:822px;top:661.5px;height:26px;line-height:26px;font-size:14px;color:#000">0.15</div><div style="position:absolute;left:864px;top:661.5px;width:21px;height:26px;background:#f0f0f0;border:1px solid #c8c8c8;box-sizing:border-box"></div><div style="position:absolute;left:865px;top:674.0px;width:19px;height:1px;background:#c8c8c8;"></div><svg style="position:absolute;left:864px;top:661.5px" width="21" height="26"><path d="M6.5 9.0 L10.5 5.0 L14.5 9.0 Z M6.5 17.0 L10.5 21.0 L14.5 17.0 Z" fill="#222"/></svg>
<div class="t" style="left:895px;top:667.27px;font-size:13.5px;color:#f0f0f0;"><b>DEC :</b> Agr</div>
<div style="position:absolute;left:958.5px;top:661.5px;width:37.5px;height:26px;background:#fff;"></div><div class="t" style="left:964.5px;top:661.5px;height:26px;line-height:26px;font-size:14px;color:#000">60</div><div style="position:absolute;left:996.0px;top:661.5px;width:21px;height:26px;background:#f0f0f0;border:1px solid #c8c8c8;box-sizing:border-box"></div><div style="position:absolute;left:997.0px;top:674.0px;width:19px;height:1px;background:#c8c8c8;"></div><svg style="position:absolute;left:996.0px;top:661.5px" width="21" height="26"><path d="M6.5 9.0 L10.5 5.0 L14.5 9.0 Z M6.5 17.0 L10.5 21.0 L14.5 17.0 Z" fill="#222"/></svg>
<div class="t" style="left:1027px;top:667.27px;font-size:13.5px;color:#f0f0f0;">MnMo</div>
<div style="position:absolute;left:1072px;top:661.5px;width:45px;height:26px;background:#fff;"></div><div class="t" style="left:1076px;top:661.5px;height:26px;line-height:26px;font-size:14px;color:#000">0.15</div><div style="position:absolute;left:1117px;top:661.5px;width:21px;height:26px;background:#f0f0f0;border:1px solid #c8c8c8;box-sizing:border-box"></div><div style="position:absolute;left:1118px;top:674.0px;width:19px;height:1px;background:#c8c8c8;"></div><svg style="position:absolute;left:1117px;top:661.5px" width="21" height="26"><path d="M6.5 9.0 L10.5 5.0 L14.5 9.0 Z M6.5 17.0 L10.5 21.0 L14.5 17.0 Z" fill="#222"/></svg>
<div class="t" style="left:502.5px;top:697.67px;font-size:13.5px;color:#f0f0f0;"><b>Scope :</b> Mx AD</div>
<div style="position:absolute;left:599.2px;top:692.3px;width:44.5px;height:26px;background:#fff;"></div><div class="t" style="left:605.2px;top:692.3px;height:26px;line-height:26px;font-size:14px;color:#000">2500</div><div style="position:absolute;left:643.7px;top:692.3px;width:21px;height:26px;background:#f0f0f0;border:1px solid #c8c8c8;box-sizing:border-box"></div><div style="position:absolute;left:644.7px;top:704.8px;width:19px;height:1px;background:#c8c8c8;"></div><svg style="position:absolute;left:643.7px;top:692.3px" width="21" height="26"><path d="M6.5 9.0 L10.5 5.0 L14.5 9.0 Z M6.5 17.0 L10.5 21.0 L14.5 17.0 Z" fill="#222"/></svg>
<div class="t" style="left:674.6px;top:697.67px;font-size:13.5px;color:#f0f0f0;">Mx DEC</div>
<div style="position:absolute;left:727.4px;top:692.3px;width:44px;height:26px;background:#fff;"></div><div class="t" style="left:733.4px;top:692.3px;height:26px;line-height:26px;font-size:14px;color:#000">4560</div><div style="position:absolute;left:771.4px;top:692.3px;width:21px;height:26px;background:#f0f0f0;border:1px solid #c8c8c8;box-sizing:border-box"></div><div style="position:absolute;left:772.4px;top:704.8px;width:19px;height:1px;background:#c8c8c8;"></div><svg style="position:absolute;left:771.4px;top:692.3px" width="21" height="26"><path d="M6.5 9.0 L10.5 5.0 L14.5 9.0 Z M6.5 17.0 L10.5 21.0 L14.5 17.0 Z" fill="#222"/></svg>
<div style="position:absolute;left:802.5px;top:692.3px;width:61.5px;height:26px;background:#d9d9d9;"></div>
<div class="t" style="left:806px;top:699.15px;font-size:14px;color:#222;">Auto</div>
<svg style="position:absolute;left:846px;top:701px" width="11" height="7"><path d="M1 1 L5.5 5.5 L10 1" fill="none" stroke="#444" stroke-width="1.2"/></svg>
<div style="position:absolute;left:0px;top:728px;width:1500px;height:44px;background:#000;"></div>
<div style="position:absolute;left:11px;top:728px;width:1489px;height:2px;background:#cfcfcf;"></div>
<div style="position:absolute;left:11px;top:728px;width:626px;height:42px;background:#c4c4c4;"></div>
<div style="position:absolute;left:12px;top:730px;width:624px;height:39px;background:#1e1e1e;"></div>
<div style="position:absolute;left:13px;top:731px;width:622px;height:37px;background:#686868;"></div>

<svg style="position:absolute;left:0;top:0" width="640" height="843">
<g fill="#cfcfcf"><rect x="16" y="737.0" width="1.6" height="1.6"/><rect x="16" y="740.5" width="1.6" height="1.6"/><rect x="16" y="744.0" width="1.6" height="1.6"/><rect x="16" y="747.5" width="1.6" height="1.6"/><rect x="16" y="751.0" width="1.6" height="1.6"/><rect x="16" y="754.5" width="1.6" height="1.6"/><rect x="16" y="758.0" width="1.6" height="1.6"/></g>
<rect x="26.6" y="734.6" width="29" height="29" rx="3.5" fill="#e8e8e8" stroke="#333" stroke-width="1.3"/>
<path d="M35.3 753.4 L30.2 758.4 L31.7 760.6 L37.4 755.3 Z" fill="#d8d8d8" stroke="#222" stroke-width="0.9"/>
<path d="M42.5 741.1 L49 747.6 L44.6 752.4 L37.4 755.3 L35.3 753.4 L37.4 746.4 Z" fill="#b0b0b0" stroke="#222" stroke-width="1"/>
<path d="M42.5 741.1 L48.5 737.3 L53.5 742.3 L49 747.6 Z" fill="#f4f4f4" stroke="#222" stroke-width="1"/>
<path d="M45.5 739.3 L50.8 744.6 M47 738.3 L52.2 743.5" stroke="#333" stroke-width="0.7"/>
<rect x="64.4" y="734.6" width="29" height="29" rx="3.5" fill="#dcfcdc" stroke="#333" stroke-width="1.3"/>
<path d="M78.7 741.1 A8.2 8.2 0 0 1 86.9 753.1" fill="none" stroke="#079440" stroke-width="3.2"/>
<path d="M74 740.9 L79.2 736 L79.2 746 Z" fill="#079440"/>
<path d="M70.6 745 A8.2 8.2 0 0 0 78.7 757.4" fill="none" stroke="#079440" stroke-width="3.2"/>
<path d="M83.6 757.6 L78.6 752.6 L78.6 762.4 Z" fill="#079440"/>
<path d="M114.3 735 L116.1 735 L116.6 743.6 L128.6 745.8 L120.3 752.3 L123.8 761.1 L115.2 756.3 L107.3 761.1 L110.2 752.3 L102.1 745.8 L113.8 743.6 Z" fill="#dadada"/>
<circle cx="118.9" cy="750.7" r="4.9" fill="#8c8c8c" stroke="#111" stroke-width="1.3"/>
<path d="M122.3 754.4 L130.3 762.4" stroke="#111" stroke-width="1.7"/>
<defs><radialGradient id="cg" cx="0.5" cy="0.5" r="0.5"><stop offset="0" stop-color="#8a8a8a"/><stop offset="0.7" stop-color="#6e6e6e"/><stop offset="1" stop-color="#505050"/></radialGradient>
<linearGradient id="stopg" x1="0" x2="1"><stop offset="0" stop-color="#c81e1e"/><stop offset="1" stop-color="#f0602a"/></linearGradient></defs>
<circle cx="153.6" cy="748.8" r="14.3" fill="url(#cg)" stroke="#1a1a1a" stroke-width="1.6"/>
<path d="M139.5 748.8 H167.7 M153.6 734.7 V762.9" stroke="#1a1a1a" stroke-width="1.1"/>
<circle cx="153.6" cy="748.8" r="2.6" fill="none" stroke="#1a1a1a" stroke-width="1"/>
<path d="M184.8 734.3 L197.5 734.3 L206.3 743.1 L206.3 755.3 L197.5 764.1 L184.8 764.1 L176 755.3 L176 743.1 Z" fill="url(#stopg)" stroke="#f8c8b8" stroke-width="0.9"/>
<path d="M185.3 735.8 L197 735.8 L204.8 743.6 L204.8 754.8 L197 762.6 L185.3 762.6 L177.5 754.8 L177.5 743.6 Z" fill="none" stroke="#fff" stroke-width="1"/>
<text x="191.2" y="754.8" font-family="Liberation Sans" font-weight="bold" font-size="14" fill="#fff" text-anchor="middle" textLength="25.5" lengthAdjust="spacingAndGlyphs">STOP</text>
<rect x="214" y="736" width="1" height="26" fill="#aaaaaa"/>
<rect x="552.5" y="736" width="1" height="26" fill="#aaaaaa"/>
<rect x="397.7" y="738.3" width="149.6" height="21.7" fill="#3a3a3a"/>
<rect x="405" y="745.6" width="134" height="4" fill="#e6e8e8"/>
<path d="M434 739.7 H443.5 V752 L438.75 756.5 L434 752 Z" fill="#0a78d8"/>
<defs><linearGradient id="brg" x1="0" y1="0" x2="1" y2="1"><stop offset="0" stop-color="#f8d0c4"/><stop offset="0.5" stop-color="#e88c74"/><stop offset="1" stop-color="#d86a50"/></linearGradient>
<linearGradient id="camg" x1="0" y1="0" x2="1" y2="0"><stop offset="0" stop-color="#5c5c5c"/><stop offset="1" stop-color="#8e8e8e"/></linearGradient></defs>
<path d="M575 754.5 L577.3 759.8 L580.3 761.3 L581.8 758.7 L584 755.5 Z" fill="#9a7a7a" stroke="#3a1a1a" stroke-width="0.9"/>
<path d="M578 754.5 L585 754.5 L583 757.5 L579.5 757.5 Z" fill="#f4a0a0"/>
<path d="M562.1 745.4 L563.6 741.6 L567.4 738.6 L574.2 737.8 L577.3 737.4 L582.6 737.8 L587.1 740.5 L590.2 744.6 L590.5 749.2 L588.6 753 L585.2 755.5 L581 755 L575 754.5 L572 752.6 L568.5 753.4 L564.7 751.8 L562.5 749.2 Z" fill="url(#brg)" stroke="#3a1a1a" stroke-width="1"/>
<rect x="574.9" y="746.3" width="1.2" height="1.2" fill="#fff3ee"/><rect x="586.2" y="745.1" width="1.2" height="1.2" fill="#fff3ee"/><rect x="576.2" y="746.6" width="1.2" height="1.2" fill="#fff3ee"/><rect x="568.4" y="745.7" width="1.2" height="1.2" fill="#fff3ee"/><rect x="579.1" y="749.3" width="1.2" height="1.2" fill="#fff3ee"/><rect x="566.3" y="742.9" width="1.2" height="1.2" fill="#fff3ee"/><rect x="566.2" y="749.5" width="1.2" height="1.2" fill="#fff3ee"/><rect x="580.6" y="739.5" width="1.2" height="1.2" fill="#fff3ee"/><rect x="587.6" y="751.5" width="1.2" height="1.2" fill="#fff3ee"/><rect x="579.7" y="747.0" width="1.2" height="1.2" fill="#fff3ee"/><rect x="567.8" y="739.2" width="1.2" height="1.2" fill="#fff3ee"/><rect x="576.7" y="739.8" width="1.2" height="1.2" fill="#fff3ee"/><rect x="568.6" y="742.1" width="1.2" height="1.2" fill="#fff3ee"/><rect x="564.7" y="745.0" width="1.2" height="1.2" fill="#fff3ee"/><rect x="574.6" y="750.0" width="1.2" height="1.2" fill="#fff3ee"/><rect x="576.5" y="747.3" width="1.2" height="1.2" fill="#fff3ee"/><rect x="576.0" y="747.6" width="1.2" height="1.2" fill="#fff3ee"/><rect x="575.0" y="742.6" width="1.2" height="1.2" fill="#fff3ee"/><rect x="587.9" y="751.9" width="1.2" height="1.2" fill="#fff3ee"/><rect x="584.2" y="748.2" width="1.2" height="1.2" fill="#fff3ee"/><rect x="571.6" y="742.0" width="1.2" height="1.2" fill="#fff3ee"/><rect x="570.9" y="739.9" width="1.2" height="1.2" fill="#fff3ee"/><rect x="582.4" y="744.2" width="1.2" height="1.2" fill="#fff3ee"/><rect x="584.3" y="744.0" width="1.2" height="1.2" fill="#fff3ee"/><rect x="587.0" y="750.0" width="1.2" height="1.2" fill="#fff3ee"/><rect x="564.0" y="741.7" width="1.2" height="1.2" fill="#fff3ee"/><rect x="585.8" y="745.1" width="1.2" height="1.2" fill="#fff3ee"/><rect x="587.5" y="744.2" width="1.2" height="1.2" fill="#fff3ee"/><rect x="565.8" y="747.2" width="1.2" height="1.2" fill="#fff3ee"/><rect x="582.7" y="742.5" width="1.2" height="1.2" fill="#fff3ee"/><rect x="566.1" y="743.3" width="1.2" height="1.2" fill="#fff3ee"/><rect x="587.1" y="748.9" width="1.2" height="1.2" fill="#fff3ee"/><rect x="566.8" y="742.2" width="1.2" height="1.2" fill="#fff3ee"/><rect x="566.4" y="739.8" width="1.2" height="1.2" fill="#fff3ee"/><rect x="583.1" y="741.3" width="1.2" height="1.2" fill="#fff3ee"/><rect x="577.4" y="744.8" width="1.2" height="1.2" fill="#fff3ee"/><rect x="568.6" y="748.5" width="1.2" height="1.2" fill="#fff3ee"/><rect x="567.1" y="747.4" width="1.2" height="1.2" fill="#fff3ee"/><rect x="566.8" y="744.5" width="1.2" height="1.2" fill="#fff3ee"/><rect x="569.1" y="742.5" width="1.2" height="1.2" fill="#fff3ee"/><rect x="587.3" y="749.4" width="1.2" height="1.2" fill="#fff3ee"/><rect x="571.3" y="750.5" width="1.2" height="1.2" fill="#fff3ee"/><rect x="569.1" y="744.1" width="1.2" height="1.2" fill="#fff3ee"/><rect x="584.5" y="747.3" width="1.2" height="1.2" fill="#fff3ee"/><rect x="566.4" y="751.9" width="1.2" height="1.2" fill="#fff3ee"/>
<path d="M601 742.6 H606.5 L609 739.2 H617.5 L620 742.6 H625 V759.3 H601 Z" fill="url(#camg)" stroke="#4a4a4a" stroke-width="1"/>
<path d="M603.2 759 L610.5 751.7" stroke="#8c8c8c" stroke-width="3.2"/>
<path d="M610 748.5 A4.2 4.2 0 0 1 613.5 743.2 L613.2 746.8 L615.6 749.2 L619.2 748.9 A4.2 4.2 0 0 1 613.9 752.4 Z" fill="#8c8c8c" stroke="#555" stroke-width="0.6"/>
</svg>
<div style="position:absolute;left:219.5px;top:736.5px;width:176px;height:25.5px;background:#e2e2e2;border:1px solid #cfcfcf;box-sizing:border-box"></div>
<div class="t" style="left:223.3px;top:742.85px;font-size:14px;color:#111;">2.0 s</div>
<svg style="position:absolute;left:380px;top:745px" width="12" height="8"><path d="M1 1 L6 6 L11 1" fill="none" stroke="#444" stroke-width="1.2"/></svg>
<div style="position:absolute;left:0px;top:772px;width:1500px;height:24px;background:#000;"></div>
<div style="position:absolute;left:0px;top:772px;width:1500px;height:1px;background:#c0c0c0;"></div>
<div class="t" style="left:2.5px;top:778.15px;font-size:14px;color:#f0f0f0;">Guidage</div>
<div style="position:absolute;left:971px;top:773px;width:1px;height:23px;background:#b0b0b0;"></div>
<div style="position:absolute;left:1007px;top:773px;width:1px;height:23px;background:#b0b0b0;"></div>
<div style="position:absolute;left:1089px;top:773px;width:1px;height:23px;background:#b0b0b0;"></div>
<div style="position:absolute;left:1227px;top:773px;width:1px;height:23px;background:#b0b0b0;"></div>
<div style="position:absolute;left:1367px;top:773px;width:1px;height:23px;background:#b0b0b0;"></div>
<div style="position:absolute;left:1421px;top:773px;width:1px;height:23px;background:#b0b0b0;"></div>
<div style="position:absolute;left:1465px;top:773px;width:1px;height:23px;background:#b0b0b0;"></div>
<div class="t" style="left:1014px;top:778.57px;font-size:13.5px;color:#f0f0f0;">RSB</div>
<div class="t" style="left:1051px;top:778.57px;font-size:13.5px;color:#10e010;">20.2</div>
<svg style="position:absolute;left:1090px;top:775px" width="16" height="12"><path d="M1 6 H9 M7 1.5 L13 6 L7 10.5 Z" stroke="#fff" stroke-width="2.4" fill="#fff"/></svg>
<div class="t" style="left:1121px;top:778.57px;font-size:13.5px;color:#e0e0e0;">99 ms, 0.1 px</div>
<div class="t" style="left:1377px;top:778.57px;font-size:13.5px;color:#10d010;">Dark</div>
<div class="t" style="left:1429px;top:778.57px;font-size:13.5px;color:#10d010;">Cal</div>
<svg style="position:absolute;left:1474px;top:774px" width="16" height="16"><defs><radialGradient id="gg" cx="0.4" cy="0.35" r="0.6"><stop offset="0" stop-color="#4cf04c"/><stop offset="1" stop-color="#0a8a0a"/></radialGradient></defs><circle cx="8" cy="8" r="7.2" fill="url(#gg)"/></svg>
<div style="position:absolute;left:0px;top:796px;width:1500px;height:47px;background:linear-gradient(90deg,#e6e6e6 0px,#e0e0e0 400px,#dfdfdf 1100px,#e3e0dc 1250px,#e6e1dc 1500px);"></div>
<div style="position:absolute;left:0px;top:795px;width:1500px;height:1px;background:#1a1a1a;"></div>
<svg style="position:absolute;left:18px;top:810px" width="20" height="19"><path d="M0.7 2.2 L7.9 1.2 V8.2 H0.7 Z M9 1 L19.6 0 V8.2 H9 Z M0.7 9.2 H7.9 V17.5 L0.7 16.6 Z M9 9.2 H19.6 V19 L9 17.8 Z" fill="#000"/></svg>
<div style="position:absolute;left:57px;top:797px;width:336px;height:46px;background:#fdfdfd;border:1px solid #cfcfcf;border-bottom:none;box-sizing:border-box"></div>
<svg style="position:absolute;left:69px;top:809px" width="22" height="22"><circle cx="13.5" cy="8.5" r="6.3" fill="none" stroke="#222" stroke-width="1.5"/><path d="M9 13 L2 20" stroke="#222" stroke-width="1.7"/></svg>
<div class="t" style="left:103.3px;top:811.43px;font-size:17.8px;color:#333;">Taper ici pour rechercher</div>
<svg style="position:absolute;left:411px;top:809px" width="22" height="22"><path d="M1 1.5 H13 M1 20 H13 M2.5 5 H11.5 V16.5 H2.5 Z M18.5 1 V7.5 M18.5 12.5 V20" fill="none" stroke="#222" stroke-width="1.4"/><circle cx="18.5" cy="10" r="1.2" fill="#222"/></svg>
<svg style="position:absolute;left:468px;top:807px" width="28" height="24"><path d="M1 2 H9 L11 4 H26 V22 H1 Z" fill="#f8c440"/><path d="M1 6 H27 V22 H1 Z" fill="#ffd866"/><rect x="1" y="2" width="11" height="3" fill="#e3a21a"/><path d="M5 23 V13 H22 V23 H18 V17 H9 V23 Z" fill="#2d8fe0"/></svg>
<svg style="position:absolute;left:525.5px;top:805.5px" width="28" height="28" viewBox="0 0 28 28">
<path d="M14 14 L26.1 7 A14 14 0 0 0 1.9 7 Z" fill="#ea4335"/>
<path d="M14 14 L1.9 7 A14 14 0 0 0 14 28 Z" fill="#34a853"/>
<path d="M14 14 L14 28 A14 14 0 0 0 26.1 7 Z" fill="#fbbc05"/>
<circle cx="14" cy="14" r="6.3" fill="#fff"/><circle cx="14" cy="14" r="5" fill="#4285f4"/></svg>
<svg style="position:absolute;left:583px;top:805px" width="30" height="29">
<defs><linearGradient id="mg" x1="0" y1="0" x2="0.3" y2="1"><stop offset="0" stop-color="#2a1a6a"/><stop offset="0.4" stop-color="#5a5a5a"/><stop offset="1" stop-color="#3a3a3a"/></linearGradient></defs>
<rect x="15.3" y="1.3" width="11.4" height="12" fill="url(#mg)"/>
<path d="M23.5 3.5 A5 5 0 0 1 17.5 11.5 A6 6 0 0 0 23.5 3.5 Z" fill="#f4f4e8"/>
<path d="M12 16.5 L20.5 9" stroke="#e0e030" stroke-width="1.2"/>
<path d="M4 17.5 L9.5 14 L14 19.5 L8.5 23.5 Z" fill="#8a8cff" stroke="#2a2a6a" stroke-width="0.7"/>
<path d="M12 17 L14 19.5 L11 22 L9.5 20 Z" fill="#2a8ad0"/>
<path d="M8.5 21.5 V26.5 M6.5 27.5 H11.5" stroke="#111" stroke-width="1.6"/>
</svg>
<svg style="position:absolute;left:642px;top:805.5px" width="29" height="29">
<rect x="0.7" y="0.7" width="27" height="26.5" fill="#061c5a" stroke="#6a6a28" stroke-width="1.3"/>
<path d="M7.5 4.4 H21 M7.5 4.4 V23.2 H20.5 M7.5 15.4 L16.3 13.7" stroke="#e4e020" stroke-width="1.5" fill="none"/>
<g fill="#fff"><circle cx="7.5" cy="4.4" r="2.3"/><circle cx="21" cy="4.4" r="2.3"/><circle cx="7.5" cy="15.4" r="2.2"/><circle cx="16.3" cy="13.7" r="2"/><circle cx="7.5" cy="23.2" r="2.3"/><circle cx="20.5" cy="22.7" r="2.3"/></g></svg>
<svg style="position:absolute;left:700px;top:805.3px" width="28" height="28">
<defs><linearGradient id="stg" x1="0" y1="0" x2="0" y2="1"><stop offset="0" stop-color="#2a2a8a"/><stop offset="0.55" stop-color="#6a4aa0"/><stop offset="0.75" stop-color="#c08090"/><stop offset="1" stop-color="#202030"/></linearGradient></defs>
<rect x="0" y="0" width="28" height="28" rx="4" fill="url(#stg)"/>
<path d="M0 22 Q10 17 28 22 V24 A4 4 0 0 1 24 28 H4 A4 4 0 0 1 0 24 Z" fill="#111"/>
<path d="M19 4 A6 6 0 1 1 14 14 A5 5 0 0 0 19 4" fill="#fff"/></svg>
<div style="position:absolute;left:744px;top:796px;width:57px;height:47px;background:#f5f5f5;"></div>
<svg style="position:absolute;left:757.5px;top:804.5px" width="30" height="30" viewBox="0 0 30 30">
<defs><radialGradient id="pg" cx="0.5" cy="0.5" r="0.5"><stop offset="0.4" stop-color="#5ad85a"/><stop offset="1" stop-color="#1e9a1e"/></radialGradient></defs><circle cx="15" cy="15" r="14" fill="#1a1a1a"/><circle cx="15" cy="15" r="12.6" fill="url(#pg)"/>
<path d="M15 1 V29 M1 15 H29" stroke="#111" stroke-width="1.6"/>
<circle cx="15" cy="15" r="6" fill="#0a0a0a"/>
<text x="15" y="17" font-family="Liberation Sans" font-weight="bold" font-size="5.5" fill="#e8e8e8" text-anchor="middle" letter-spacing="-0.3">PHD</text>
<text x="22.5" y="9" font-family="Liberation Sans" font-size="4" fill="#cfe" text-anchor="middle">2</text></svg>
<svg style="position:absolute;left:816px;top:805px" width="28" height="29">
<rect x="0.5" y="0.5" width="20" height="26" fill="#2a3a48"/>
<rect x="9" y="9" width="17" height="13" fill="#e8e8e8" stroke="#777" stroke-width="1"/><rect x="11" y="11" width="13" height="9" fill="#9aa4ac"/>
<rect x="15" y="22" width="5" height="3" fill="#aaa"/><rect x="2" y="19" width="9" height="8" rx="1" fill="#ddd" stroke="#888" stroke-width="0.8"/><circle cx="6.5" cy="23" r="2" fill="#456"/></svg>
<svg style="position:absolute;left:875.5px;top:805px" width="28" height="29">
<rect x="0.5" y="0.5" width="27" height="27" rx="2" fill="#d8d8d8" stroke="#9a9a9a"/>
<rect x="3" y="3" width="22" height="15" fill="#6a8a5a"/><rect x="3" y="3" width="22" height="6" fill="#9ab0c8"/>
<circle cx="10" cy="10" r="3" fill="#c89a7a"/><circle cx="17" cy="10" r="3" fill="#b08060"/>
<rect x="6" y="15" width="16" height="12" rx="2" fill="#1a1a1a"/><circle cx="14" cy="21" r="4" fill="#333" stroke="#555"/></svg>
<div style="position:absolute;left:575px;top:840px;width:47.5px;height:3px;background:#4a3550;"></div>
<div style="position:absolute;left:633px;top:840px;width:47.5px;height:3px;background:#4a3550;"></div>
<div style="position:absolute;left:691px;top:840px;width:48px;height:3px;background:#4a3550;"></div>
<div style="position:absolute;left:744px;top:840px;width:57px;height:3px;background:#4a3550;"></div>
<div style="position:absolute;left:807px;top:840px;width:48px;height:3px;background:#4a3550;"></div>
<div style="position:absolute;left:865px;top:840px;width:48px;height:3px;background:#4a3550;"></div>
<svg style="position:absolute;left:1203px;top:813px" width="17" height="12"><path d="M1 10 L8.2 2.5 L15.5 10" fill="none" stroke="#222" stroke-width="1.4"/></svg>
<svg style="position:absolute;left:1230px;top:808px" width="80" height="24">
<path d="M5 4.6 A9 9 0 0 1 13.6 4.6 M5 18.6 A9 9 0 0 0 13.6 18.6" fill="none" stroke="#222" stroke-width="1.1"/>
<rect x="4.6" y="7.8" width="8.6" height="7.8" rx="1.2" fill="none" stroke="#222" stroke-width="1.3"/>
<path d="M13.2 10.2 L16.6 8.4 V15 L13.2 13.2" fill="none" stroke="#222" stroke-width="1.3"/>
<circle cx="37.2" cy="11.4" r="8.4" fill="none" stroke="#111" stroke-width="1.4"/>
<ellipse cx="37.2" cy="11.4" rx="4" ry="8.4" fill="none" stroke="#111" stroke-width="1.3"/>
<path d="M29.2 9.2 H45.2 M29.2 13.4 H41" stroke="#111" stroke-width="1.2"/>
<circle cx="42.6" cy="16.5" r="4.2" fill="#e2e0dc" stroke="#111" stroke-width="1.3"/>
<path d="M40.3 14.2 L44.9 18.8" stroke="#111" stroke-width="1.2"/>
<path d="M57 5.5 V8 M59.6 5.5 V8 M56 8 H60.6 V9.5 L58.3 11 L56 9.5 Z M58.3 11 V16.5" fill="none" stroke="#111" stroke-width="1.1"/>
<rect x="60.7" y="7.7" width="13.3" height="8.8" fill="none" stroke="#111" stroke-width="1.1"/>
<rect x="62" y="9" width="10.8" height="6.2" fill="#000"/>
<rect x="74" y="10.2" width="1.2" height="3.6" fill="#111"/>
</svg>
<div class="t" style="left:1318.5px;top:813.32px;font-size:13.8px;color:#222;">FRA</div>
<div class="t" style="left:1378px;top:801.85px;font-size:14px;color:#222;">22:24</div>
<div class="t" style="left:1360px;top:823.35px;font-size:14px;color:#222;">31/10/2023</div>
<svg style="position:absolute;left:1450px;top:808px" width="32" height="32">
<path d="M2 2 H21 V15 H12 L8 19 V15 H2 Z" fill="#111"/><path d="M5 6 H18 M5 9 H18 M5 12 H14" stroke="#e3e3e3" stroke-width="1"/>
<circle cx="20" cy="21" r="8.5" fill="#e3e3e3" stroke="#888" stroke-width="1.4"/>
<text x="20" y="25.5" font-family="Liberation Sans" font-size="12.5" fill="#111" text-anchor="middle">4</text></svg>
<div style="position:absolute;left:1495px;top:796px;width:1px;height:47px;background:#c8c8c8;"></div>
</body></html>
